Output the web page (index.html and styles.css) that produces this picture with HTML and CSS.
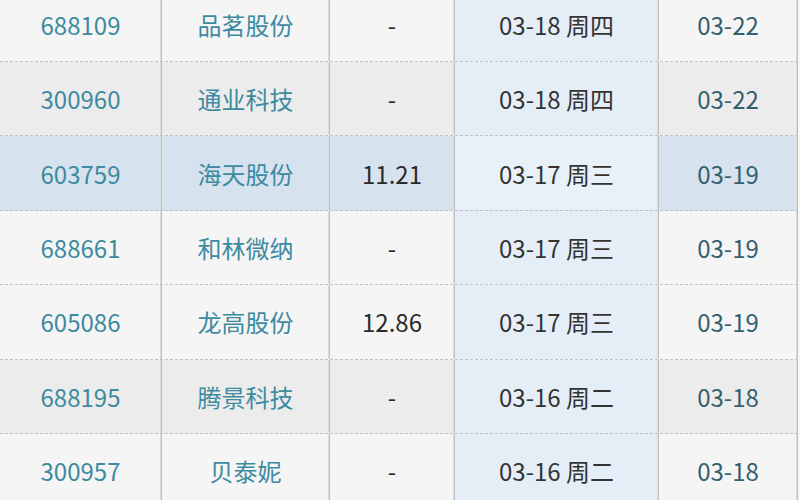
FILE: index.html
```html
<!DOCTYPE html>
<html lang="zh-CN">
<head>
<meta charset="utf-8">
<link rel="stylesheet" href="styles.css">
</head>
<body>
<div class="table">
  <div class="row odd"><div class="c code">688109</div><div class="c name">品茗股份</div><div class="c price">-</div><div class="c date">03-18 周四</div><div class="c list">03-22</div></div>
  <div class="row even"><div class="c code">300960</div><div class="c name">通业科技</div><div class="c price">-</div><div class="c date">03-18 周四</div><div class="c list">03-22</div></div>
  <div class="row hl"><div class="c code">603759</div><div class="c name">海天股份</div><div class="c price">11.21</div><div class="c date">03-17 周三</div><div class="c list">03-19</div></div>
  <div class="row odd"><div class="c code">688661</div><div class="c name">和林微纳</div><div class="c price">-</div><div class="c date">03-17 周三</div><div class="c list">03-19</div></div>
  <div class="row odd"><div class="c code">605086</div><div class="c name">龙高股份</div><div class="c price">12.86</div><div class="c date">03-17 周三</div><div class="c list">03-19</div></div>
  <div class="row even"><div class="c code">688195</div><div class="c name">腾景科技</div><div class="c price">-</div><div class="c date">03-16 周二</div><div class="c list">03-18</div></div>
  <div class="row odd"><div class="c code">300957</div><div class="c name">贝泰妮</div><div class="c price">-</div><div class="c date">03-16 周二</div><div class="c list">03-18</div></div>
</div>
</body>
</html>
```
FILE: styles.css
```css
html, body {
  margin: 0;
  padding: 0;
  background: #f7f7f7;
  overflow: hidden;
  width: 800px;
  height: 500px;
}
.table {
  margin-top: -12.4px;
  width: 798px;
  font-family: "Noto Sans CJK SC", "Noto Sans", sans-serif;
  font-size: 24px;
}
.row {
  display: grid;
  grid-template-columns: 162px 168px 125px 204px 139px;
  height: 74.4px;
  box-sizing: border-box;
  border-bottom: 1px dashed #bfc2c4;
}
.c {
  display: flex;
  align-items: center;
  justify-content: center;
  border-right: 1px solid #bdbebf;
  box-shadow: inset -1px 0 0 #dcdddd;
  box-sizing: border-box;
}
.row.odd { background: #f5f5f5; }
.row.even { background: #ececec; }
.row.hl { background: #d6e3ee; }
.code, .name { color: #3d8aa1; }
.price { color: #2a2a2a; }
.date { color: #333; background: #e5eef7; }
.row.hl .date { background: #e8f0f8; }
.list { color: #33606e; }
```
